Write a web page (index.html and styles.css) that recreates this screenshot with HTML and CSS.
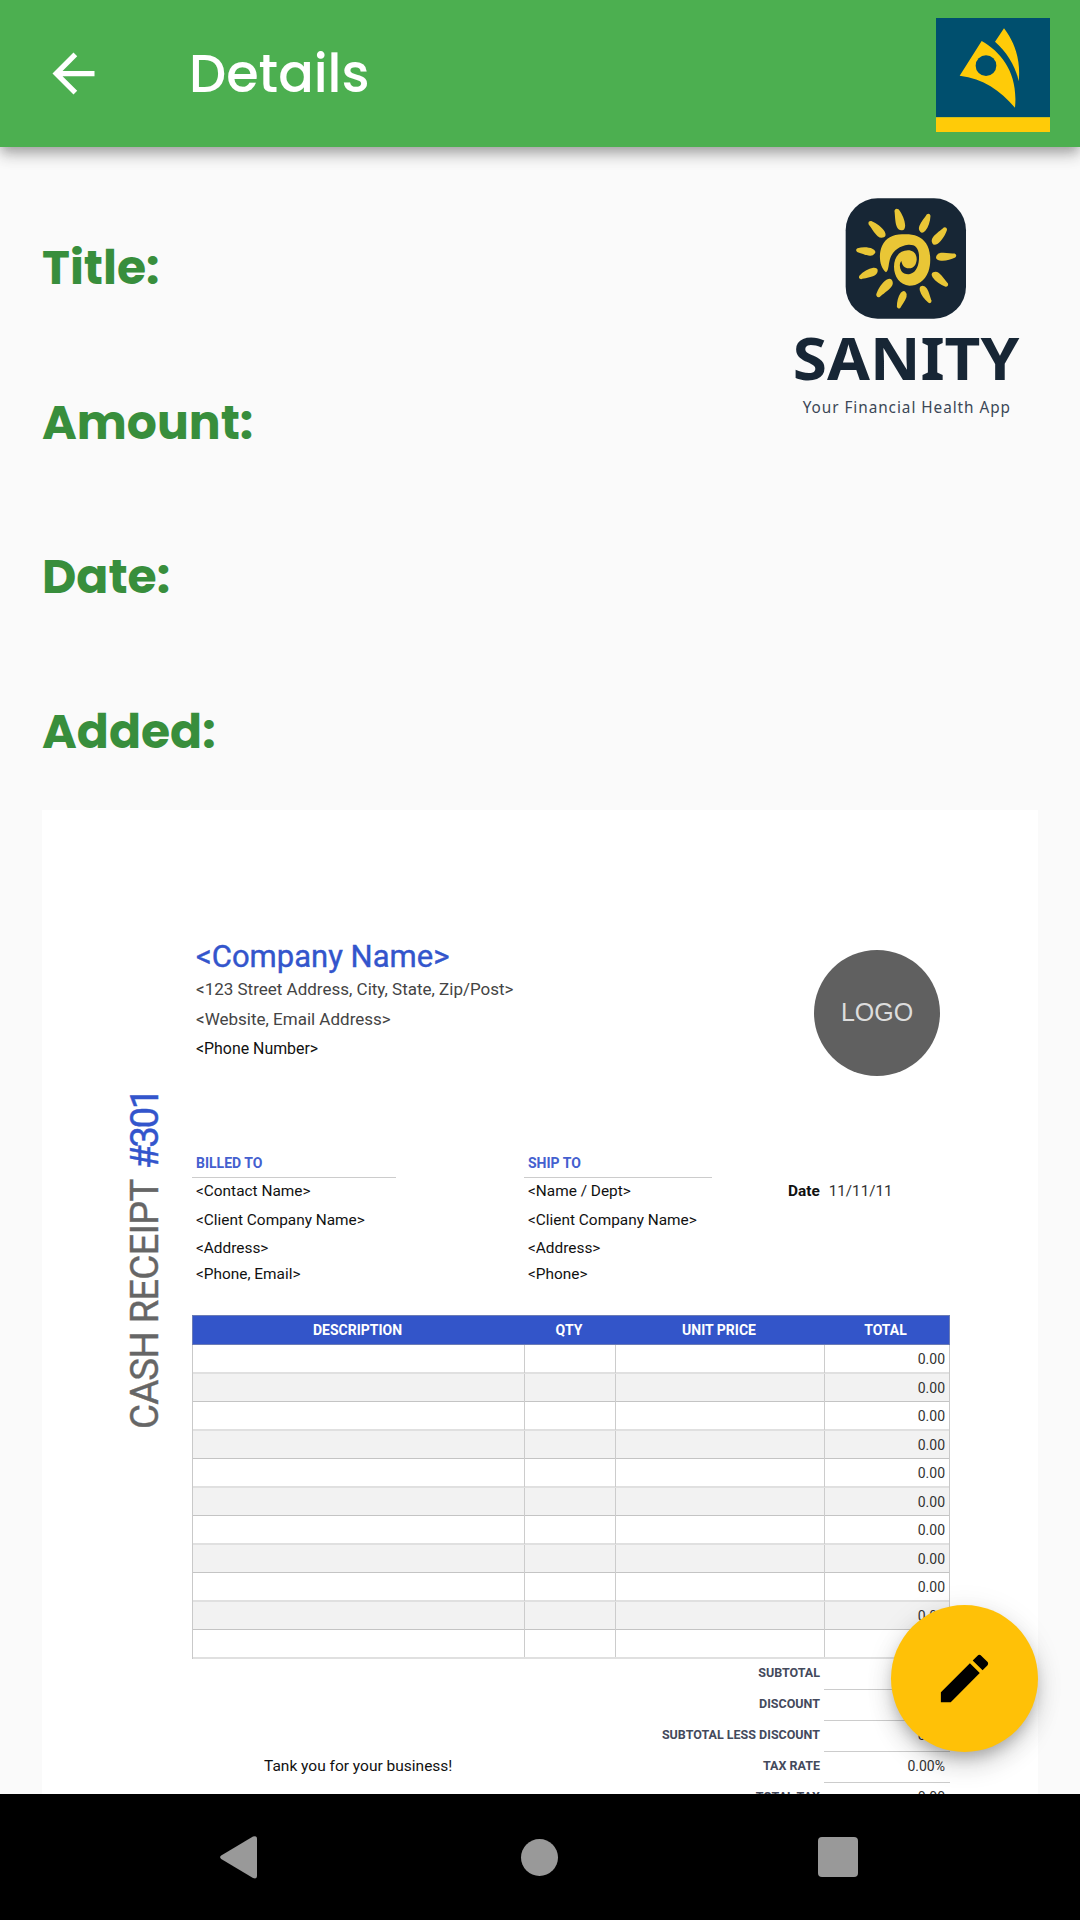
FILE: index.html
```html
<!DOCTYPE html>
<html lang="en">
<head>
<meta charset="utf-8">
<title>Details</title>
<link rel="stylesheet" href="styles.css">
</head>
<body>
<header class="app-bar">
  <svg class="back" viewBox="0 0 24 24"><path fill="#fff" d="M20 11H7.83l5.59-5.59L12 4l-8 8 8 8 1.41-1.41L7.83 13H20z"/></svg>
  <h1 class="title">Details</h1>
  <svg class="bank-logo" viewBox="108 54 342 342">
    <path fill="#004f6e" d="M108 54h342v298H108z"/>
    <path fill="#ffcb08" d="M108 352h342v44H108z"/>
    <path fill="#ffcb08" d="M245 123C305 157 355 220 345 323C300 270 250 236 179 227Z"/>
    <circle cx="258" cy="197" r="31" fill="#004f6e"/>
    <path fill="#ffcb08" d="M312 85L285 125C320 155 348 200 356 244C362 190 350 135 312 85Z"/>
  </svg>
</header>

<main class="page">
  <section class="summary">
    <dl class="fields">
      <dt class="field">Title:</dt>
      <dt class="field">Amount:</dt>
      <dt class="field">Date:</dt>
      <dt class="field">Added:</dt>
    </dl>
    <svg class="brand" viewBox="0 0 780 750">
      <defs>
        <path id="ray" d="M-6 4Q0-5 7 3C14 20 17 40 13 56Q8 70-1 66Q-11 62-12 50C-13 35-7 15-6 4Z"/>
      </defs>
      <rect x="197" y="55" width="361" height="361" rx="96" fill="#172635"/>
      <g fill="#e9c636">
        <use href="#ray" transform="translate(348 87) rotate(-15.5)"/>
        <use href="#ray" transform="translate(447 102) rotate(25.3) scale(.9)"/>
        <use href="#ray" transform="translate(498 143) rotate(40.4) scale(.94)"/>
        <use href="#ray" transform="translate(528 226) rotate(86) scale(.9)"/>
        <use href="#ray" transform="translate(503 317) rotate(132) scale(.9)"/>
        <use href="#ray" transform="translate(452 368) rotate(151.6) scale(.86)"/>
        <use href="#ray" transform="translate(355 385) rotate(-158) scale(.82)"/>
        <use href="#ray" transform="translate(292 350) rotate(-138.5)"/>
        <use href="#ray" transform="translate(238 294) rotate(-113) scale(.9)"/>
        <use href="#ray" transform="translate(229 210) rotate(-80.7) scale(.86)"/>
        <use href="#ray" transform="translate(267 126) rotate(-45) scale(.97)"/>
        <path d="M318 277C298 262 295 222 306 198C317 175 338 163 366 163C398 161 422 167 438 190C453 212 454 250 445 275C434 303 412 317 388 317C360 314 342 290 342 260C342 232 358 211 384 211C402 211 411 224 410 240C408 256 400 266 386 265C374 264 367 258 364 243C358 250 358 262 364 273C370 281 380 284 390 282C412 276 418 250 417 225C415 202 405 193 385 194C350 198 332 222 328 245C325 258 326 270 318 277Z"/>
      </g>
      <text class="brand-name" x="38" y="600" textLength="680" lengthAdjust="spacingAndGlyphs">SANITY</text>
      <text class="brand-tag" x="68" y="698" textLength="622">Your Financial Health App</text>
    </svg>
  </section>

  <article class="receipt">
    <div class="side"><span class="side-text">CASH RECEIPT <span class="side-no">#301</span></span></div>
    <div class="content">
      <div class="company">
        <div>
          <h2 class="company-name">&lt;Company Name&gt;</h2>
          <p class="company-line">&lt;123 Street Address, City, State, Zip/Post&gt;</p>
          <p class="company-line">&lt;Website, Email Address&gt;</p>
          <p class="company-phone">&lt;Phone Number&gt;</p>
        </div>
        <div class="logo">LOGO</div>
      </div>

      <div class="parties">
        <div class="party billed">
          <h3 class="party-title">BILLED TO</h3>
          <p class="l1">&lt;Contact Name&gt;</p>
          <p class="l2">&lt;Client Company Name&gt;</p>
          <p class="l3">&lt;Address&gt;</p>
          <p class="l4">&lt;Phone, Email&gt;</p>
        </div>
        <div class="party ship">
          <h3 class="party-title">SHIP TO</h3>
          <p class="l1">&lt;Name / Dept&gt;</p>
          <p class="l2">&lt;Client Company Name&gt;</p>
          <p class="l3">&lt;Address&gt;</p>
          <p class="l4">&lt;Phone&gt;</p>
        </div>
        <div class="date"><b>Date</b><span class="date-value">11/11/11</span></div>
      </div>

      <div class="items">
        <div class="row head"><span>DESCRIPTION</span><span>QTY</span><span>UNIT PRICE</span><span>TOTAL</span></div>
        <div class="row"><i></i><i></i><i></i><span>0.00</span></div>
        <div class="row alt"><i></i><i></i><i></i><span>0.00</span></div>
        <div class="row"><i></i><i></i><i></i><span>0.00</span></div>
        <div class="row alt"><i></i><i></i><i></i><span>0.00</span></div>
        <div class="row"><i></i><i></i><i></i><span>0.00</span></div>
        <div class="row alt"><i></i><i></i><i></i><span>0.00</span></div>
        <div class="row"><i></i><i></i><i></i><span>0.00</span></div>
        <div class="row alt"><i></i><i></i><i></i><span>0.00</span></div>
        <div class="row"><i></i><i></i><i></i><span>0.00</span></div>
        <div class="row alt"><i></i><i></i><i></i><span>0.00</span></div>
        <div class="row"><i></i><i></i><i></i><span></span></div>
      </div>

      <div class="totals">
        <div class="total"><span></span><b>SUBTOTAL</b><span class="amount"></span></div>
        <div class="total"><span></span><b>DISCOUNT</b><span class="amount"></span></div>
        <div class="total"><span></span><b>SUBTOTAL LESS DISCOUNT</b><span class="amount">0.00</span></div>
        <div class="total"><span class="thanks">Tank you for your business!</span><b>TAX RATE</b><span class="amount">0.00%</span></div>
        <div class="total"><span></span><b>TOTAL TAX</b><span class="amount">0.00</span></div>
      </div>
    </div>
  </article>

  <button class="fab" aria-label="Edit">
    <svg class="fab-icon" viewBox="0 0 24 24"><path d="M3 17.25V21h3.75L17.81 9.94l-3.75-3.75L3 17.25zM20.71 7.04c.39-.39.39-1.02 0-1.41l-2.34-2.34c-.39-.39-1.02-.39-1.41 0l-1.83 1.83 3.75 3.75 1.83-1.83z"/></svg>
  </button>
</main>

<nav class="nav">
  <svg class="nav-back" viewBox="0 0 37 43"><path fill="#999" d="M1.2 19.6L33 .6Q37 -1 37 3V40Q37 43.6 33 42L1.2 23Q-1 21.3 1.2 19.6Z"/></svg>
  <span class="nav-home"></span>
  <span class="nav-recent"></span>
</nav>
</body>
</html>
```
FILE: styles.css
```css
* { box-sizing: border-box; margin: 0; padding: 0; }

body {
  width: 1080px;
  height: 1920px;
  display: flex;
  flex-direction: column;
  overflow: hidden;
  background: #fafafa;
  font-family: Roboto, "Liberation Sans", sans-serif;
}

/* App bar */
.app-bar {
  flex: none;
  height: 147px;
  padding: 0 30px 0 42px;
  display: flex;
  align-items: center;
  background: #4caf50;
  position: relative;
  z-index: 2;
  box-shadow: 0 5px 10px -2px rgba(0, 0, 0, .2), 0 10px 13px 0 rgba(0, 0, 0, .14), 0 2px 20px 0 rgba(0, 0, 0, .12);
}
.back { width: 63px; height: 63px; }
.title {
  flex: 1;
  margin-left: 84px;
  font: 500 52.5px/60px Poppins, Inter, sans-serif;
  color: #fff;
}
.bank-logo { width: 114px; height: 114px; margin-top: 3px; }

/* Page */
.page { flex: 1; min-height: 0; overflow: hidden; position: relative; }
.summary { height: 662.5px; padding: 33px 40px 0 42px; display: flex; justify-content: space-between; }
.fields { padding-top: 11px; }
.field {
  height: 154.6px;
  font: 700 47.25px/154.6px Poppins, Inter, sans-serif;
  color: #388e3c;
}
.brand { width: 260px; height: 250px; }
.brand-name { font: 700 180px "Noto Sans", sans-serif; fill: #172635; }
.brand-tag { font: 400 46px "Noto Sans", sans-serif; fill: #3a4756; }

/* Receipt */
.receipt {
  width: 996px;
  height: 1100px;
  margin: 0 42px;
  padding-top: 129.5px;
  display: grid;
  grid-template-columns: 150px 758px;
  background: #fff;
  font-size: 15.4px;
  color: #111;
}
.side { padding: 150px 0 0 83px; }
.side-text {
  display: block;
  height: 340px;
  writing-mode: vertical-rl;
  transform: rotate(180deg);
  font-size: 38.5px;
  line-height: 40px;
  letter-spacing: -.9px;
  white-space: nowrap;
  color: #666;
  -webkit-text-stroke: .4px;
}
.side-no { margin-inline-start: 3px; color: #3355cc; letter-spacing: -2.4px; }

.company { height: 210px; padding: 0 10px 0 4px; display: flex; justify-content: space-between; }
.company-name { font-size: 31px; font-weight: 400; line-height: 36px; color: #3355cc; -webkit-text-stroke: .4px; }
.company-line { font-size: 17px; line-height: 29.6px; color: #444; }
.company-phone { font-size: 15.9px; line-height: 29px; }
.logo {
  width: 126px;
  height: 126px;
  margin-top: 11px;
  border-radius: 50%;
  background: #606060;
  color: #ddd;
  font: 25px/124px "Liberation Sans", sans-serif;
  text-align: center;
}

.parties { height: 166px; display: grid; grid-template-columns: 332px 264px 162px; }
.party p { padding-left: 4px; }
.party-title {
  height: 29px;
  padding-left: 4px;
  border-bottom: 1px solid #ccc;
  font-size: 14px;
  line-height: 28px;
  color: #4460cf;
}
.billed .party-title { width: 204px; }
.ship .party-title { width: 188px; }
.l1 { line-height: 26px; }
.l2 { line-height: 32px; }
.l3 { line-height: 24px; }
.l4 { line-height: 28px; }
.date { padding-top: 29px; line-height: 26px; display: flex; gap: 9px; }
.date-value { font-size: 15.2px; color: #333; }

.items { border: solid #c9c9c9; border-width: 0 1px; }
.row {
  height: 29px;
  display: grid;
  grid-template-columns: 332px 91px 209px 124px;
  border-bottom: 2px solid #e0e0e0;
  font-size: 14px;
  line-height: 28px;
  color: #333;
}
.row > * { border-right: 1px solid #ccc; }
.row > :last-child { border: 0; padding-right: 4px; text-align: right; }
.alt { height: 28px; background: #f2f2f2; border-bottom: 1px solid #c4c4c4; }
.head {
  height: 30px;
  margin: 0 -1px;
  padding: 0 1px;
  border: 1px solid #6b7cb5;
  background: #3355c9;
  color: #fff;
  font-weight: 700;
  line-height: 29px;
  text-align: center;
}
.head > *, .head > :last-child { border: 0; padding: 0 5px 0 0; text-align: center; }

.total {
  height: 30.9px;
  display: grid;
  grid-template-columns: 332px 300px 126px;
  line-height: 28.4px;
}
.total b { padding-right: 4px; font-size: 12.5px; color: #444a5c; text-align: right; white-space: nowrap; }
.thanks { padding-left: 72px; font-size: 15.5px; }
.amount { padding-right: 5px; border-bottom: 1px solid #ccc; font-size: 14px; color: #333; text-align: right; }

/* Floating action button */
.fab {
  position: absolute;
  right: 42px;
  bottom: 42px;
  width: 147px;
  height: 147px;
  border: 0;
  border-radius: 50%;
  background: #ffc107;
  display: grid;
  place-items: center;
  box-shadow: 0 8px 13px -3px rgba(0, 0, 0, .2), 0 14px 26px 0 rgba(0, 0, 0, .14), 0 3px 30px 0 rgba(0, 0, 0, .08);
}
.fab-icon { width: 63px; height: 63px; }

/* System navigation */
.nav {
  flex: none;
  height: 126px;
  padding-left: 220px;
  display: grid;
  grid-template-columns: 301px 297px 40px;
  align-items: center;
  background: #000;
}
.nav-back { width: 37px; height: 43px; }
.nav-home { width: 37px; height: 37px; border-radius: 50%; background: #999; }
.nav-recent { width: 40px; height: 40px; border-radius: 4px; background: #999; }
```
